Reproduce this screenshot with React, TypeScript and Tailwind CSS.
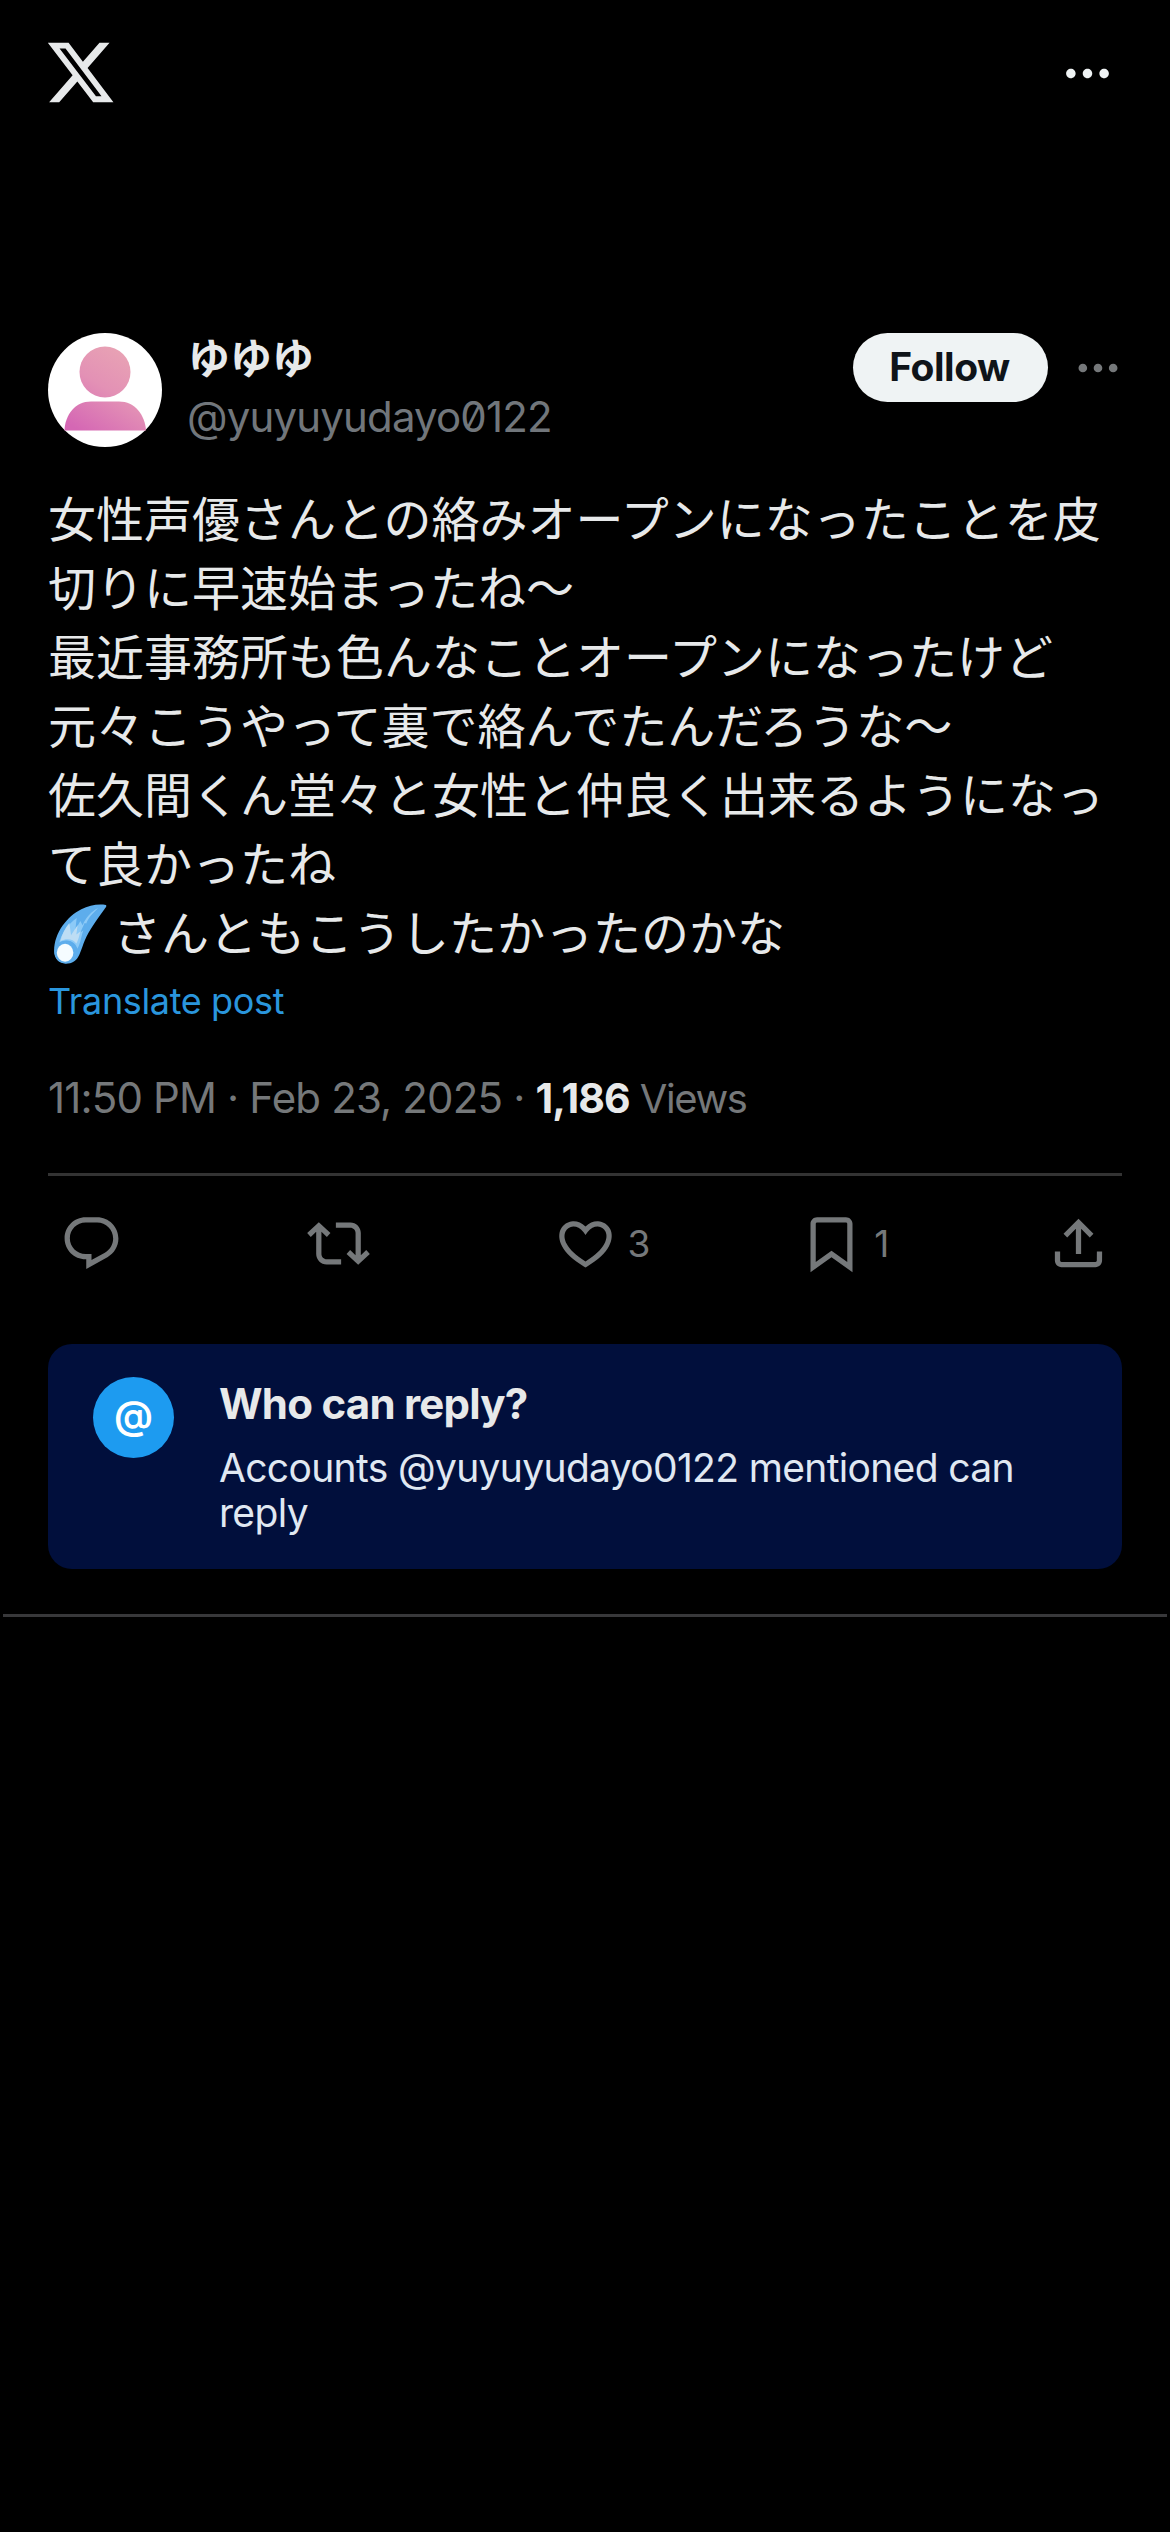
/**
 * Post detail page (dark theme)
 * Single post with author, stats, actions and the reply restriction notice
 */

interface IconProps {
  path: string
  className?: string
}

function Icon({ path, className }: IconProps) {
  return (
    <svg viewBox="0 0 24 24" className={`shrink-0 fill-current ${className}`}>
      <path d={path} />
    </svg>
  )
}

const paths = {
  logo: "M18.244 2.25h3.308l-7.227 8.26 8.502 11.24H16.17l-5.214-6.817L4.99 21.75H1.68l7.73-8.835L1.254 2.25H8.08l4.713 6.231zm-1.161 17.52h1.833L7.084 4.126H5.117z",
  more: "M3 12c0-1.1.9-2 2-2s2 .9 2 2-.9 2-2 2-2-.9-2-2zm9 2c1.1 0 2-.9 2-2s-.9-2-2-2-2 .9-2 2 .9 2 2 2zm7 0c1.1 0 2-.9 2-2s-.9-2-2-2-2 .9-2 2 .9 2 2 2z",
  reply:
    "M1.751 10c0-4.42 3.584-8 8.005-8h4.366c4.49 0 8.129 3.64 8.129 8.13 0 2.96-1.607 5.68-4.196 7.11l-8.054 4.46v-3.69h-.067c-4.49.1-8.183-3.51-8.183-8.01zm8.005-6c-3.317 0-6.005 2.69-6.005 6 0 3.37 2.77 6.08 6.138 6.01l.351-.01h1.761v2.3l5.087-2.81c1.951-1.08 3.163-3.13 3.163-5.36 0-3.39-2.744-6.13-6.129-6.13H9.756z",
  repost:
    "M4.5 3.88l4.432 4.14-1.364 1.46L5.5 7.55V16c0 1.1.896 2 2 2H13v2H7.5c-2.209 0-4-1.79-4-4V7.55L1.432 9.48.068 8.02 4.5 3.88zM16.5 6H11V4h5.5c2.209 0 4 1.79 4 4v8.45l2.068-1.93 1.364 1.46-4.432 4.14-4.432-4.14 1.364-1.46 2.068 1.93V8c0-1.1-.896-2-2-2z",
  like: "M16.697 5.5c-1.222-.06-2.679.51-3.89 2.16l-.805 1.09-.806-1.09C9.984 6.01 8.526 5.44 7.304 5.5c-1.243.07-2.349.78-2.91 1.91-.552 1.12-.633 2.78.479 4.82 1.074 1.97 3.257 4.27 7.129 6.61 3.87-2.34 6.052-4.64 7.126-6.61 1.111-2.04 1.03-3.7.477-4.82-.561-1.13-1.666-1.84-2.908-1.91zm4.187 7.69c-1.351 2.48-4.001 5.12-8.379 7.67l-.503.3-.504-.3c-4.379-2.55-7.029-5.19-8.382-7.67-1.36-2.5-1.41-4.86-.514-6.67.887-1.79 2.647-2.91 4.601-3.01 1.651-.09 3.368.56 4.798 2.01 1.429-1.45 3.146-2.1 4.796-2.01 1.954.1 3.714 1.22 4.601 3.01.896 1.81.846 4.17-.514 6.67z",
  bookmark:
    "M4 4.5C4 3.12 5.119 2 6.5 2h11C18.881 2 20 3.12 20 4.5v18.44l-8-5.71-8 5.71V4.5zM6.5 4c-.276 0-.5.22-.5.5v14.56l6-4.29 6 4.29V4.5c0-.28-.224-.5-.5-.5h-11z",
  share:
    "M12 2.59l5.7 5.7-1.41 1.42L13 6.41V16h-2V6.41l-3.3 3.3-1.41-1.42L12 2.59zM21 15l-.02 3.51c0 1.38-1.12 2.49-2.5 2.49H5.5C4.11 21 3 19.88 3 18.5V15h2v3.5c0 .28.22.5.5.5h12.98c.28 0 .5-.22.5-.5L19 15h2z",
}

const lines = [
  "女性声優さんとの絡みオープンになったことを皮",
  "切りに早速始まったね〜",
  "最近事務所も色んなことオープンになったけど",
  "元々こうやって裏で絡んでたんだろうな〜",
  "佐久間くん堂々と女性と仲良く出来るようになっ",
  "て良かったね",
]

const actions = [
  { name: "Reply", path: paths.reply, count: "" },
  { name: "Repost", path: paths.repost, count: "" },
  { name: "Like", path: paths.like, count: "3" },
  { name: "Bookmark", path: paths.bookmark, count: "1" },
]

function Avatar() {
  return (
    <svg viewBox="0 0 114 114" className="size-[114px] shrink-0">
      <defs>
        <linearGradient id="person" gradientUnits="userSpaceOnUse" x1="78" y1="20" x2="30" y2="97">
          <stop offset="0" stopColor="#e8a2b4" />
          <stop offset="0.45" stopColor="#e391b5" />
          <stop offset="1" stopColor="#d567b4" />
        </linearGradient>
      </defs>
      <circle cx="57" cy="57" r="57" fill="#fff" />
      <circle cx="57" cy="39" r="25.5" fill="url(#person)" />
      <path d="M16.5 97.5C17 82 27 68.5 43 68.5h28c16 0 26 13.500 27 29z" fill="url(#person)" />
    </svg>
  )
}

function Comet() {
  return (
    <svg viewBox="15 25 180 190" className="mt-[5px] mr-[3px] ml-0.5 h-[63px] w-[60px]">
      <path
        d="M183 34c4 3-1 8-6 15-22 31-43 58-58 93-5 12-9 26-16 42-8 18-22 27-41 27-22 0-35-17-35-38 0-56 40-105 82-126 24-12 50-17 74-13z"
        fill="#5dadec"
      />
      <path
        d="M160 43c-20 10-38 28-47 52l-7-13-15 27 4-36c-27 20-45 45-53 75 30-18 52 2 55 18 12-22 10-33 18-55l-9 6 13-29 5 2c7-19 19-30 36-47z"
        fill="#8ccaf7"
      />
      <path
        d="M73 88c-13 16-23 34-27 55 20-10 39-5 48 7 7-12 8-23 13-37l-13 10 4-29-20 31z"
        fill="#bdddf4"
      />
      <circle cx="62" cy="176" r="34" fill="#5dadec" />
      <ellipse cx="60" cy="178" rx="25" ry="27" fill="#f5fcff" />
    </svg>
  )
}

function PostHeader() {
  return (
    <div className="flex items-start">
      <Avatar />
      <div className="ml-[25px] flex flex-1 flex-col gap-2 pt-px leading-[50px]">
        <span className="pl-px text-[42px] font-bold text-[#e7e9ea]">ゆゆゆ</span>
        <span className="text-[42px] tracking-[-0.02em] text-[#71767b] slashed-zero">@yuyuyudayo0122</span>
      </div>
      <button className="h-[69px] w-[195px] rounded-full bg-[#eff3f4] pr-0.5 text-[39px] leading-[67px] font-bold tracking-[-0.012em] text-[#0f1419]">
        <span className="block h-[69px]">Follow</span>
      </button>
      <Icon path={paths.more} className="mt-[9px] mr-[-2px] ml-6 size-[52px] text-[#75787a]" />
    </div>
  )
}

function ActionBar() {
  return (
    <div className="flex px-3 text-[#75787a]">
      {actions.map(action => (
        <div key={action.name} className="flex w-[247px] items-center gap-[11px]">
          <Icon path={action.path} className="size-[63px]" />
          <span className="text-[37px] leading-[50px]">{action.count}</span>
        </div>
      ))}
      <Icon path={paths.share} className="size-[63px]" />
    </div>
  )
}

function ReplyNotice() {
  return (
    <div className="flex h-[225px] rounded-3xl bg-[#010f3c] pt-[33px] pl-[45px]">
      <div className="flex size-[81px] shrink-0 items-center justify-center rounded-full bg-[#1d9bf0]">
        <span className="pb-[5px] text-[39px] leading-[50px] font-semibold text-white">@</span>
      </div>
      <div className="ml-[45px] pt-0.5">
        <h2 className="text-[42px] leading-[50px] font-bold tracking-[-0.018em] text-[#e7e9ea]">Who can reply?</h2>
        <p className="mt-4 w-[830px] text-[39px] leading-[45px] tracking-[-0.017em] text-[#e0e8f2]">
          Accounts @yuyuyudayo0122 mentioned can reply
        </p>
      </div>
    </div>
  )
}

export default function App() {
  return (
    <div className="min-h-[2532px] w-[1170px] bg-black font-['Inter','Noto_Sans_CJK_JP',sans-serif]">
      <header className="flex h-[109px] items-center justify-between pt-9 pr-[54px] pl-[44px]">
        <Icon path={paths.logo} className="size-[73px] text-[#e7e9ea]" />
        <Icon path={paths.more} className="mt-0.5 size-[57px] text-[#eff3f4]" />
      </header>

      <main className="px-12 pt-[224px]">
        <PostHeader />

        <div
          lang="ja"
          className="mt-[35px] text-[48px] leading-[69px] whitespace-nowrap text-[#e7e9ea] font-['Noto_Sans_CJK_JP','Inter',sans-serif]"
        >
          {lines.map(line => (
            <p key={line}>{line}</p>
          ))}
          <p className="flex h-[69px] items-center">
            <Comet />
            さんともこうしたかったのかな
          </p>
        </div>
        <div className="mt-[14px] text-[36px] leading-[44px] tracking-[-0.01em] text-[#2a96dd]">Translate post</div>

        <div className="mt-[50px] h-[50px] text-[42px] leading-[50px] tracking-[-0.02em] text-[#75787a]">
          11:50 PM · Feb 23, 2025 · <span className="text-[41px] font-bold text-[#e7e9ea]">1,186</span>
          <span className="text-[40px] tracking-[-0.035em]"> Views</span>
        </div>

        <div className="mt-[50px] mb-9 h-[3px] bg-[#333]" />
        <ActionBar />
        <div className="mt-[69px]">
          <ReplyNotice />
        </div>
      </main>

      <div className="mx-[3px] mt-[45px] h-[3px] bg-[#38383a]" />
    </div>
  )
}
